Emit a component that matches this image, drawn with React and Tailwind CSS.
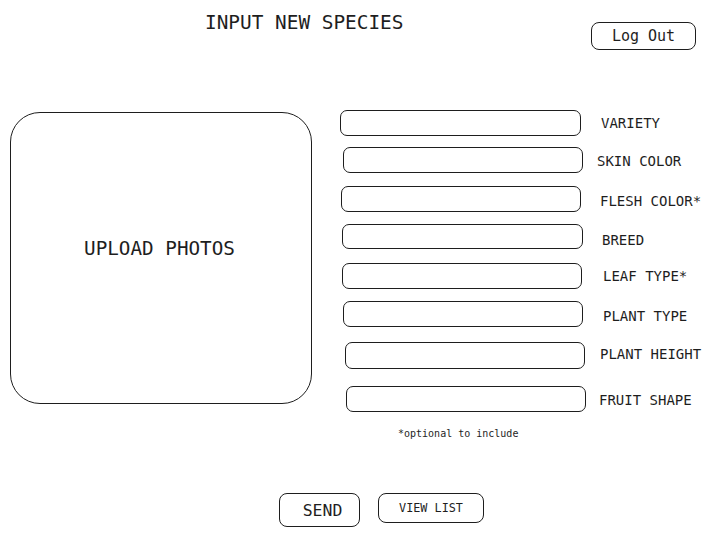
import React from "react";

const rows = [
  { label: "VARIETY", row: "mt-0 ml-0", box: "w-[241px] h-[26px]", lab: "ml-[20px] mt-[4px]" },
  { label: "SKIN COLOR", row: "mt-[11px] ml-[3px]", box: "w-[240px] h-[26px]", lab: "ml-[14px] mt-[5px]" },
  { label: "FLESH COLOR*", row: "mt-[13px] ml-[1px]", box: "w-[240px] h-[26px]", lab: "ml-[19px] mt-[6px]" },
  { label: "BREED", row: "mt-[12px] ml-[2px]", box: "w-[241px] h-[25px]", lab: "ml-[19px] mt-[7px]" },
  { label: "LEAF TYPE*", row: "mt-[14px] ml-[2px]", box: "w-[240px] h-[26px]", lab: "ml-[21px] mt-[4px]" },
  { label: "PLANT TYPE", row: "mt-[12px] ml-[3px]", box: "w-[240px] h-[26px]", lab: "ml-[20px] mt-[6px]" },
  { label: "PLANT HEIGHT", row: "mt-[15px] ml-[5px]", box: "w-[240px] h-[27px]", lab: "ml-[15px] mt-[3px]" },
  { label: "FRUIT SHAPE", row: "mt-[17px] ml-[6px]", box: "w-[240px] h-[26px]", lab: "ml-[13px] mt-[5px]" },
];

export default function App() {
  return (
    <div className="w-[721px] h-[536px] bg-white text-[#1e1e1e] font-['DejaVu_Sans_Mono',monospace] overflow-hidden">
      <div className="flex items-start h-[50px]">
        <div className="ml-[205px] mt-[11px] text-[19.4px] leading-[24px] whitespace-nowrap">INPUT NEW SPECIES</div>
        <div className="ml-auto mr-[25px] mt-[22px] w-[105px] h-[28px] border-[1.5px] border-[#1e1e1e] rounded-[8px] flex items-center justify-center text-[15px] leading-[18px]">
          Log Out
        </div>
      </div>
      <div className="flex items-start mt-[60px]">
        <div className="ml-[10px] mt-[2px] w-[302px] h-[292px] border-[1.5px] border-[#1e1e1e] rounded-[30px] flex items-start justify-center pt-[124px] pr-[3px] text-[19.3px] leading-[24px] shrink-0">
          UPLOAD PHOTOS
        </div>
        <div className="ml-[28px] flex flex-col">
          {rows.map((r) => (
            <div key={r.label} className={"flex items-start " + r.row}>
              <div className={"border-[1.5px] border-[#1e1e1e] rounded-[7px] shrink-0 " + r.box}></div>
              <div className={"text-[14px] leading-[18px] whitespace-nowrap " + r.lab}>{r.label}</div>
            </div>
          ))}
          <div className="ml-[58px] mt-[15px] text-[10px] leading-[14px] whitespace-nowrap">*optional to include</div>
        </div>
      </div>
      <div className="flex items-start mt-[52px] ml-[279px] gap-[18px]">
        <div className="w-[81px] h-[34px] border-[1.5px] border-[#1e1e1e] rounded-[8px] flex items-center justify-center pl-[6px] pt-[1px] text-[16.5px] leading-[20px]">
          SEND
        </div>
        <div className="w-[106px] h-[30px] border-[1.5px] border-[#1e1e1e] rounded-[8px] flex items-center justify-center text-[11.8px] leading-[14px]">
          VIEW LIST
        </div>
      </div>
    </div>
  );
}
